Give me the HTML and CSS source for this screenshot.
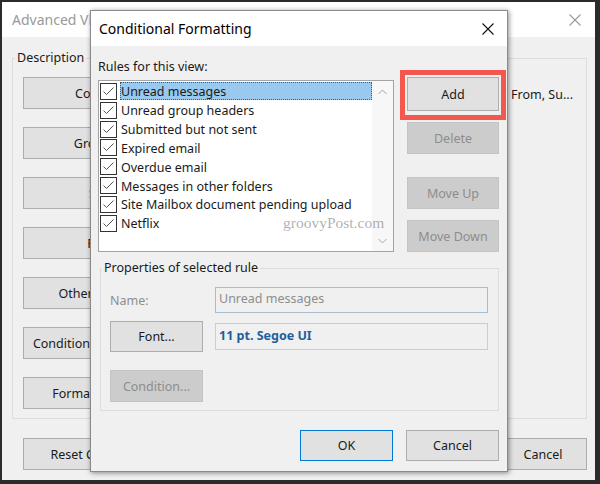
FILE: index.html
```html
<!DOCTYPE html>
<html>
<head>
  <link rel="stylesheet" href="styles.css">
</head>
<body>
  <div class="window">
    <div class="titlebar">
      <span class="title">Advanced View Settings: Compact</span>
      <svg class="close" width="12" height="12" viewBox="0 0 12 12"><path d="M0.5 0.5 L11.5 11.5 M11.5 0.5 L0.5 11.5" stroke="#9a9a9a" stroke-width="1.1" fill="none"/></svg>
    </div>
    <div class="content">
      <fieldset class="group description">
        <legend>Description</legend>
        <div class="settings">
          <div class="setting"><button class="wide">Columns...</button><span class="value">Icon, Attachment, From, Su...</span></div>
          <div class="setting"><button class="wide">Group By...</button></div>
          <div class="setting"><button class="wide">Sort...</button></div>
          <div class="setting"><button class="wide">Filter...</button></div>
          <div class="setting"><button class="wide">Other Settings...</button></div>
          <div class="setting"><button class="wide">Conditional Formatting...</button></div>
          <div class="setting"><button class="wide">Format Columns...</button></div>
        </div>
      </fieldset>
      <div class="footer">
        <button class="wide">Reset Current View</button>
        <div class="actions">
          <button class="small">OK</button>
          <button class="small">Cancel</button>
        </div>
      </div>
    </div>
  </div>

  <div class="dialog">
    <div class="titlebar">
      <span class="title">Conditional Formatting</span>
      <svg class="close" width="12" height="12" viewBox="0 0 12 12"><path d="M0.5 0.5 L11.5 11.5 M11.5 0.5 L0.5 11.5" stroke="#111" stroke-width="1.1" fill="none"/></svg>
    </div>
    <div class="dialog-body">
      <div class="rules">
        <div class="rules-left">
          <div class="label">Rules for this view:</div>
          <div class="list">
            <ul class="items">
              <li class="item selected"><span class="check"><svg width="15" height="15" viewBox="0 0 15 15"><path d="M2.5 7.5 L5.5 10.5 L12.5 3.5" stroke="#555" fill="none"/></svg></span><span class="item-text">Unread messages</span></li>
              <li class="item"><span class="check"><svg width="15" height="15" viewBox="0 0 15 15"><path d="M2.5 7.5 L5.5 10.5 L12.5 3.5" stroke="#555" fill="none"/></svg></span><span class="item-text">Unread group headers</span></li>
              <li class="item"><span class="check"><svg width="15" height="15" viewBox="0 0 15 15"><path d="M2.5 7.5 L5.5 10.5 L12.5 3.5" stroke="#555" fill="none"/></svg></span><span class="item-text">Submitted but not sent</span></li>
              <li class="item"><span class="check"><svg width="15" height="15" viewBox="0 0 15 15"><path d="M2.5 7.5 L5.5 10.5 L12.5 3.5" stroke="#555" fill="none"/></svg></span><span class="item-text">Expired email</span></li>
              <li class="item"><span class="check"><svg width="15" height="15" viewBox="0 0 15 15"><path d="M2.5 7.5 L5.5 10.5 L12.5 3.5" stroke="#555" fill="none"/></svg></span><span class="item-text">Overdue email</span></li>
              <li class="item"><span class="check"><svg width="15" height="15" viewBox="0 0 15 15"><path d="M2.5 7.5 L5.5 10.5 L12.5 3.5" stroke="#555" fill="none"/></svg></span><span class="item-text">Messages in other folders</span></li>
              <li class="item"><span class="check"><svg width="15" height="15" viewBox="0 0 15 15"><path d="M2.5 7.5 L5.5 10.5 L12.5 3.5" stroke="#555" fill="none"/></svg></span><span class="item-text">Site Mailbox document pending upload</span></li>
              <li class="item"><span class="check"><svg width="15" height="15" viewBox="0 0 15 15"><path d="M2.5 7.5 L5.5 10.5 L12.5 3.5" stroke="#555" fill="none"/></svg></span><span class="item-text">Netflix</span></li>
            </ul>
            <div class="scrollbar">
              <svg width="9" height="6" viewBox="0 0 9 6"><path d="M0.5 5 L4.5 1 L8.5 5" stroke="#a6a6a6" fill="none"/></svg>
              <svg width="9" height="6" viewBox="0 0 9 6"><path d="M0.5 1 L4.5 5 L8.5 1" stroke="#a6a6a6" fill="none"/></svg>
            </div>
            <span class="watermark">groovyPost.com</span>
          </div>
        </div>
        <div class="rules-buttons">
          <div class="add-wrap"><button class="side add">Add</button></div>
          <button class="side delete" disabled>Delete</button>
          <button class="side move-up" disabled>Move Up</button>
          <button class="side move-down" disabled>Move Down</button>
        </div>
      </div>

      <fieldset class="group properties">
        <legend>Properties of selected rule</legend>
        <div class="props">
          <span class="name-label">Name:</span>
          <div class="name-box">Unread messages</div>
          <button class="prop-btn">Font...</button>
          <div class="font-box">11 pt. Segoe UI</div>
          <button class="prop-btn condition" disabled>Condition...</button>
        </div>
      </fieldset>

      <div class="dialog-footer">
        <button class="small ok">OK</button>
        <button class="small">Cancel</button>
      </div>
    </div>
  </div>
</body>
</html>
```

FILE: styles.css
```css
body {
  margin: 0;
  padding: 2px 5px 4px 2px;
  height: 484px;
  box-sizing: border-box;
  background-color: #2b2b2b;
  font-family: "Noto Sans", sans-serif;
  font-size: 12.5px;
  color: #1a1a1a;
  position: relative;
  overflow: hidden;
}

button {
  font-family: inherit;
  font-size: 12.5px;
  color: #1a1a1a;
  background-color: #e1e1e1;
  border: 1px solid #adadad;
  padding: 0;
  margin: 0;
  box-sizing: border-box;
}

button:disabled {
  background-color: #cccccc;
  border-color: #c4c4c4;
  color: #8d8d8d;
}

fieldset.group {
  margin: 0;
  padding: 0;
  border: 1px solid #dcdcdc;
  min-width: 0;
}

fieldset.group legend {
  margin-left: 2px;
  padding: 0 2px;
  line-height: 18px;
  font-size: 12.5px;
}

.window {
  height: 478px;
  background-color: #f0f0f0;
  display: flex;
  flex-direction: column;
}

.titlebar {
  height: 35px;
  flex: none;
  background-color: white;
  display: flex;
  align-items: center;
  justify-content: space-between;
  padding: 0 14px 0 10px;
  overflow: hidden;
  white-space: nowrap;
}

.window .title {
  font-size: 14px;
  color: #999;
}

.content {
  padding: 12px 8px 0 10px;
}

.settings {
  padding: 10px 13px 9px 10px;
  display: flex;
  flex-direction: column;
  gap: 18px;
}

.setting {
  display: flex;
  align-items: center;
  justify-content: space-between;
  height: 32px;
}

.value {
  color: #1a1a1a;
  padding-top: 3px;
}

button.wide {
  width: 166px;
  height: 32px;
}

button.small {
  width: 88px;
  height: 32px;
}

.footer {
  margin: 19px 0 0 11px;
  display: flex;
  justify-content: space-between;
}

.actions {
  display: flex;
  gap: 10px;
}

/* conditional formatting dialog, on top of the settings window */
.dialog {
  position: absolute;
  left: 90px;
  top: 10px;
  width: 418px;
  height: 462px;
  box-sizing: border-box;
  border: 1px solid #8a8a8a;
  background-color: #f0f0f0;
  box-shadow: 1px 1px 5px rgba(0, 0, 0, 0.45);
  display: flex;
  flex-direction: column;
}

.dialog .titlebar {
  padding: 0 13px 0 8px;
}

.dialog .title {
  font-size: 14px;
  color: #000;
}

.dialog-body {
  padding: 11px 8px 0 7px;
}

.rules {
  display: flex;
  gap: 13px;
}

.rules-left {
  width: 296px;
}

.label {
  line-height: 18px;
  margin-bottom: 4px;
  padding-top: 1px;
}

.list {
  height: 172px;
  box-sizing: border-box;
  border: 1px solid #a3a3a3;
  background-color: white;
  display: flex;
  position: relative;
  overflow: hidden;
}

.items {
  flex: 1;
  list-style: none;
  margin: 0;
  padding: 1px 0 0 1px;
}

.item {
  display: flex;
  align-items: center;
  height: 18.85px;
  white-space: nowrap;
}

.check {
  width: 17px;
  height: 17px;
  flex: none;
  box-sizing: border-box;
  border: 1px solid #333;
  display: flex;
}

.item-text {
  margin-left: 3px;
  padding: 1px 1px 0;
  line-height: 17px;
}

.item.selected .item-text {
  flex: 1;
  background-color: #99c9ef;
  outline: 1px dotted #555;
  outline-offset: -1px;
}

.scrollbar {
  width: 21px;
  flex: none;
  background-color: #f7f7f7;
  display: flex;
  flex-direction: column;
  justify-content: space-between;
  align-items: center;
  padding: 8px 0 7px;
  box-sizing: border-box;
}

.watermark {
  position: absolute;
  left: 184px;
  top: 133px;
  font-family: "Liberation Serif", serif;
  font-size: 15.5px;
  color: rgba(110, 110, 110, 0.55);
}

.rules-buttons {
  width: 92px;
  margin-top: 20px;
  display: flex;
  flex-direction: column;
}

button.side {
  width: 92px;
  height: 32px;
}

button.add {
  height: 34px;
}

.add-wrap {
  position: relative;
}

.add-wrap::after {
  content: "";
  position: absolute;
  left: -7px;
  right: -7px;
  top: -7px;
  bottom: -9px;
  border: 5px solid #f2584d;
}

.delete,
.move-down {
  margin-top: 11px;
}

.move-up {
  margin-top: 23px;
}

fieldset.properties {
  margin: 7px 0 0 2px;
}

fieldset.properties legend {
  margin-left: 1px;
}

.props {
  padding: 10px 10px 8px 9px;
  display: grid;
  grid-template-columns: 93px 1fr;
  grid-template-rows: 26px 31px 42px;
  column-gap: 12px;
  row-gap: 8px;
  align-items: center;
}

.name-label {
  color: #8d8d8d;
}

.name-box {
  height: 26px;
  box-sizing: border-box;
  border: 1px solid #a9bccd;
  color: #8d8d8d;
  padding-left: 3px;
  line-height: 22px;
}

.prop-btn {
  height: 31px;
}

.font-box {
  height: 27px;
  box-sizing: border-box;
  border: 1px solid #cccccc;
  color: #1f5f9e;
  font-weight: bold;
  padding-left: 3px;
  line-height: 24px;
}

.prop-btn.condition {
  height: 32px;
  align-self: end;
}

.dialog-footer {
  margin-top: 19px;
  display: flex;
  justify-content: flex-end;
  gap: 13px;
}

.dialog-footer button.small {
  width: 93px;
  height: 31px;
}

button.ok {
  border-color: #0078d7;
}
```
